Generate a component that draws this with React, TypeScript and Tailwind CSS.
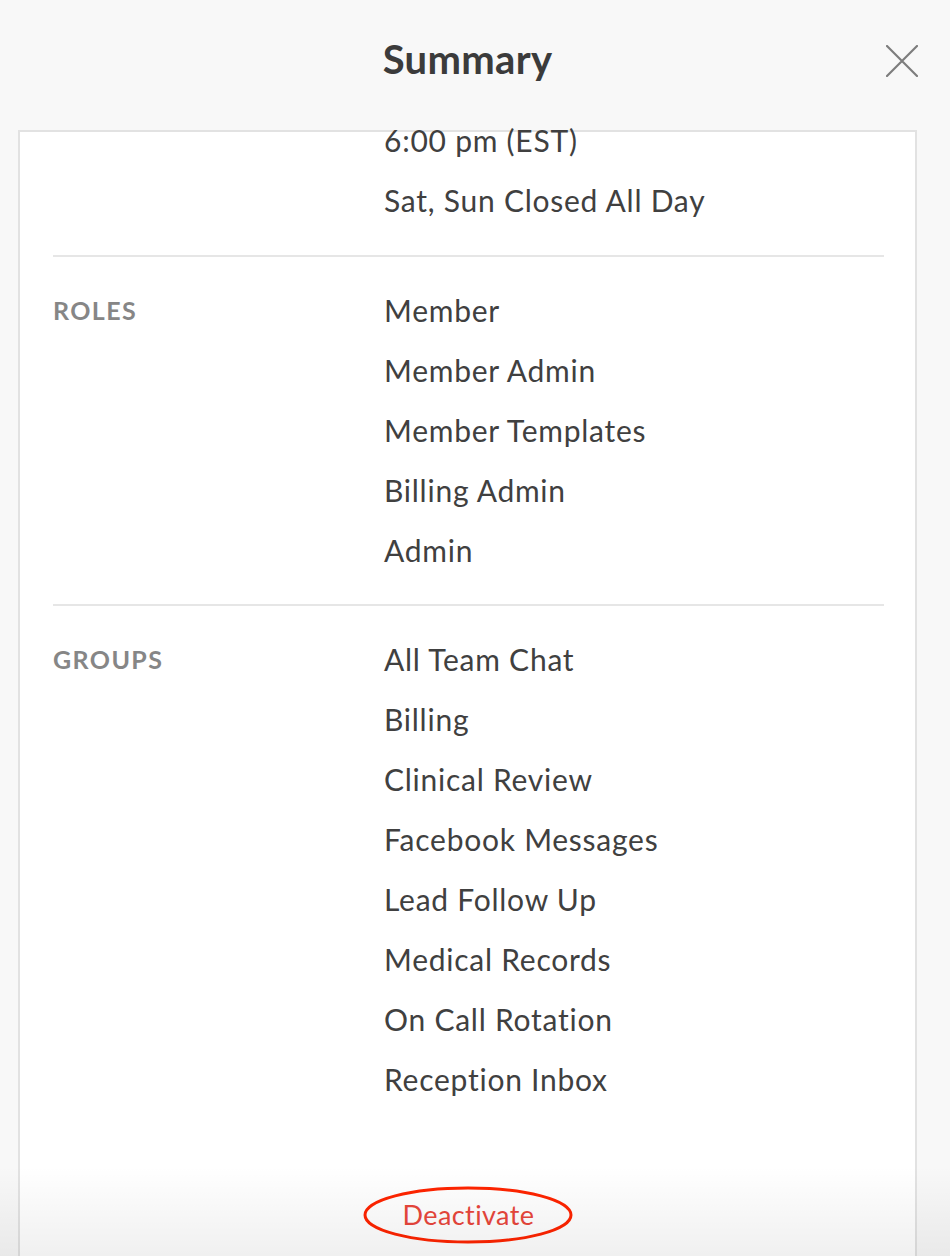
import { Fragment } from "react";

type Section = {
  label?: string;
  items: string[];
};

const sections: Section[] = [
  { items: ["6:00 pm (EST)", "Sat, Sun Closed All Day"] },
  { label: "ROLES", items: ["Member", "Member Admin", "Member Templates", "Billing Admin", "Admin"] },
  {
    label: "GROUPS",
    items: [
      "All Team Chat",
      "Billing",
      "Clinical Review",
      "Facebook Messages",
      "Lead Follow Up",
      "Medical Records",
      "On Call Rotation",
      "Reception Inbox",
    ],
  },
];

function CloseIcon() {
  return (
    <svg width="32" height="32" viewBox="0 0 32 32" fill="none">
      <path d="M1 1 L31 31 M31 1 L1 31" stroke="#7d7d7d" strokeWidth="2.2" strokeLinecap="round" />
    </svg>
  );
}

export default function App() {
  return (
    <div className="relative h-[1256px] w-[950px] overflow-hidden bg-[#f8f8f8] font-['Lato','Open_Sans',sans-serif] text-[#404040]">
      {/* header */}
      <header className="ml-[18px] grid h-[130px] w-[899px] grid-cols-[1fr_auto_1fr] items-center pb-[12px]">
        <div />
        <h1 className="text-[40px] font-bold leading-none tracking-[0.3px] text-[#3b3b3b]">Summary</h1>
        <button className="mr-[-1px] justify-self-end pt-[4px]">
          <CloseIcon />
        </button>
      </header>

      {/* card */}
      <div className="ml-[18px] w-[899px] border-2 border-b-0 border-[#e2e2e2] bg-white pl-[33px] pr-[31px]">
        <div className="-mt-[22px]">
          {sections.map((s, i) => (
            <Fragment key={i}>
              {i > 0 && <div className="h-[2px] bg-[#e6e6e6]" />}
              <div className={`grid grid-cols-[331px_1fr] ${i === 0 ? "pb-[25px]" : "pt-[23px]"} ${i === 1 ? "pb-6" : ""}`}>
                <div className="text-[25px] font-bold leading-[60px] tracking-[1.4px] text-[#868686]">{s.label}</div>
                <ul>
                  {s.items.map((it) => (
                    <li key={it} className="text-[30px] leading-[60px] tracking-[0.75px]">
                      {it}
                    </li>
                  ))}
                </ul>
              </div>
            </Fragment>
          ))}
        </div>

        {/* footer */}
        <div className="flex h-[200px] justify-center pt-[91px]">
          <div className="relative h-[30px]">
            <button className="text-[27px] leading-[30px] tracking-[0.4px] text-[#e8463b]">Deactivate</button>
            <svg
              className="pointer-events-none absolute left-1/2 top-1/2 -translate-x-1/2 -translate-y-1/2"
              width="212"
              height="60"
              viewBox="0 0 212 60"
              fill="none"
            >
              <ellipse cx="106" cy="30" rx="103" ry="27" stroke="#ff2400" strokeWidth="3" />
            </svg>
          </div>
        </div>
      </div>

      {/* bottom fade */}
      <div className="pointer-events-none absolute bottom-0 left-0 h-[90px] w-full bg-gradient-to-b from-black/0 to-black/[0.06]" />
    </div>
  );
}
